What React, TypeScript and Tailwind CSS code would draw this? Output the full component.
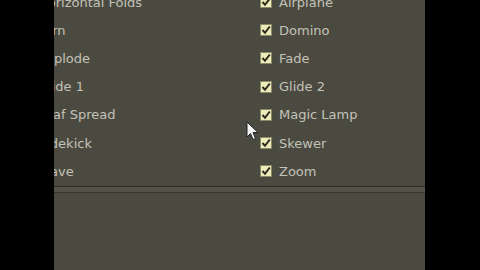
const left = ["Horizontal Folds", "Turn", "Explode", "Glide 1", "Leaf Spread", "Sidekick", "Wave"];
const right = ["Airplane", "Domino", "Fade", "Glide 2", "Magic Lamp", "Skewer", "Zoom"];

function Check() {
  return (
    <span className="w-[12px] h-[12px] bg-[#ecebb9] border border-[#8a8a6a] flex items-center justify-center shrink-0">
      <svg width="10" height="10" viewBox="0 0 10 10">
        <path d="M1.5 5 L4 7.8 L8.8 1.5" fill="none" stroke="#2b2b1e" strokeWidth="2" />
      </svg>
    </span>
  );
}

function Item({ label }: { label: string }) {
  return (
    <div className="h-[28.2px] flex items-center gap-[7px]">
      <Check />
      <span className="text-[13px] text-[#c3c2b8] leading-none">{label}</span>
    </div>
  );
}

export default function App() {
  return (
    <div className="w-[480px] h-[270px] flex bg-black overflow-hidden relative" style={{ fontFamily: '"DejaVu Sans", sans-serif' }}>
      <div className="w-[54px] shrink-0 bg-black" />
      <div className="w-[371px] shrink-0 bg-[#4b4a41] overflow-hidden flex flex-col">
        <div className="flex -ml-[35px] -mt-[12px]">
          <div className="w-[241px] shrink-0 flex flex-col">
            {left.map((l) => (
              <Item key={l} label={l} />
            ))}
          </div>
          <div className="flex flex-col">
            {right.map((r) => (
              <Item key={r} label={r} />
            ))}
          </div>
        </div>
        <div className="mt-[0.5px] h-[1px] bg-[#2e2d27]" />
        <div className="h-[5px] bg-[#545349]" />
        <div className="h-[1px] bg-[#38372f]" />
      </div>
      <div className="flex-1 bg-black" />
      <svg className="absolute left-[246px] top-[121px]" width="14" height="20" viewBox="0 0 14 20">
        <path d="M1 1 L1 16 L4.5 12.5 L7 18.5 L9.5 17.5 L7 11.5 L12 11.5 Z" fill="#f4f4f4" stroke="#222" strokeWidth="1" />
      </svg>
    </div>
  );
}
